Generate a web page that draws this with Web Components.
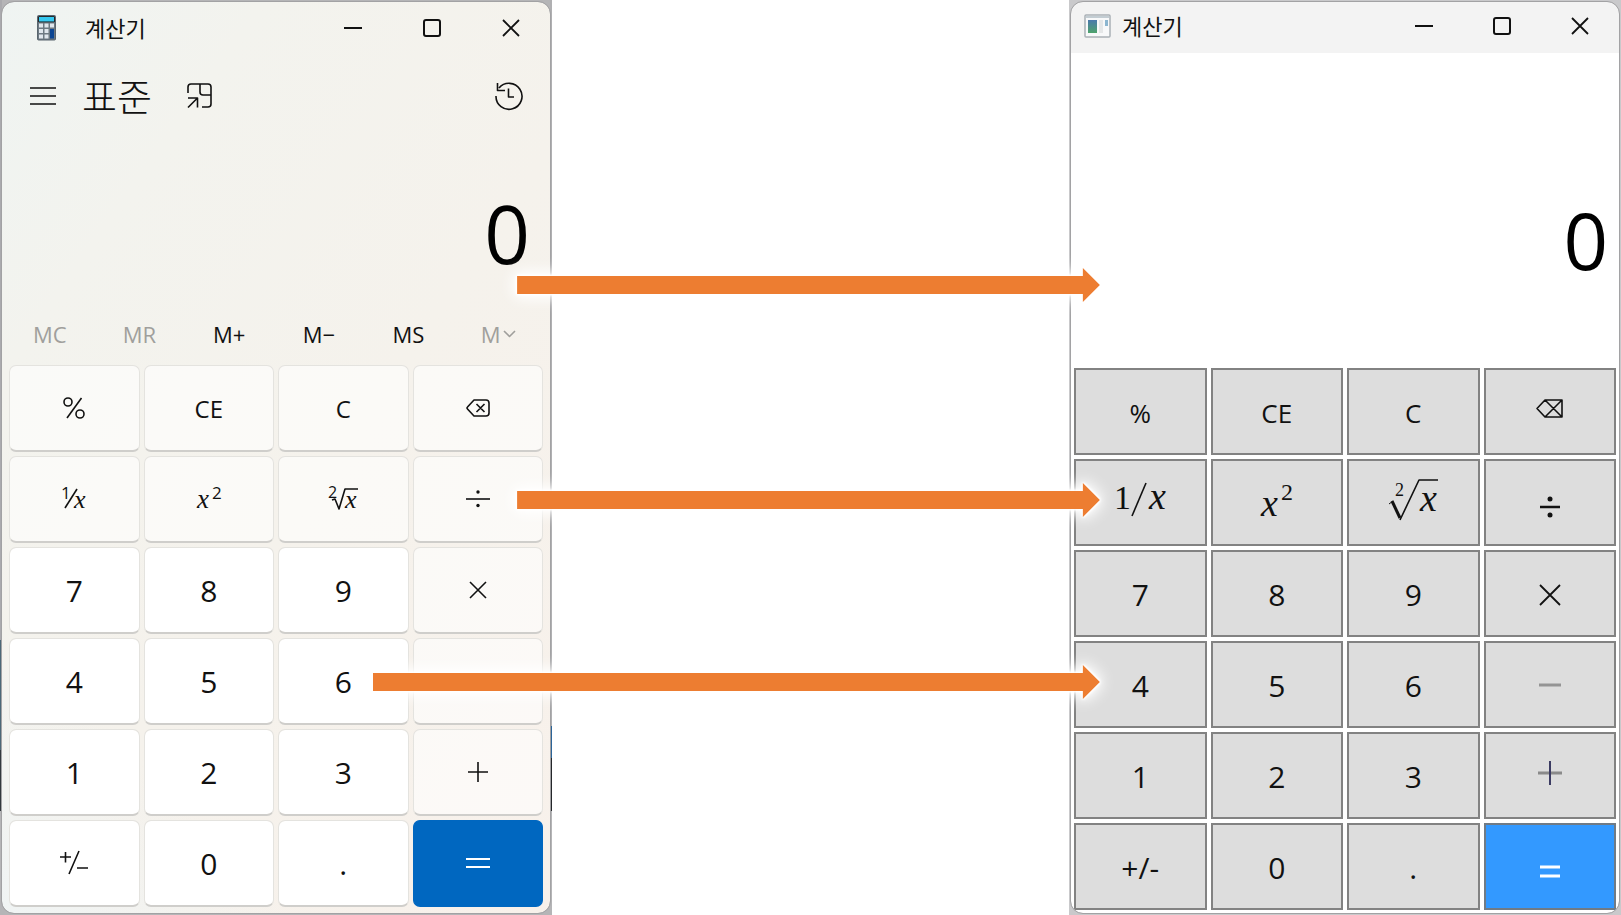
<!DOCTYPE html>
<html lang="ko">
<head>
<meta charset="utf-8">
<title>계산기</title>
<style>
  body {
    margin: 0;
    background: #fff;
    font-family: "Open Sans", "Noto Sans CJK KR", sans-serif;
    color: #111;
  }
</style>
</head>
<body>
<calc-compare>
  <calc-window slot="before" theme="fluent" heading="계산기">
    <mode-bar slot="top" mode="표준"></mode-bar>
    <calc-display slot="top">0</calc-display>
    <memory-bar slot="top"></memory-bar>
    <calc-keypad theme="fluent"></calc-keypad>
  </calc-window>
  <calc-window slot="after" theme="classic" heading="계산기">
    <calc-display slot="top">0</calc-display>
    <calc-keypad theme="classic"></calc-keypad>
  </calc-window>
  <flow-arrow slot="arrows" from="display"></flow-arrow>
  <flow-arrow slot="arrows" from="operator"></flow-arrow>
  <flow-arrow slot="arrows" from="digit"></flow-arrow>
</calc-compare>

<script>
/**
Icons, keyed by name. Every one is drawn in its own viewBox at natural size.
**/
const ICONS = {
  app: `<svg width="20" height="26" viewBox="0 0 20 26">
    <rect x=".5" y=".5" width="18" height="24.5" rx="1" fill="#6d7982" stroke="#59656e" stroke-width="1"/>
    <rect x="2" y="2" width="15" height="4.5" fill="#35c8f0"/>
    <g fill="#dfe6ec" stroke="none"><path d="M2 8.500h4v4H2zM7.500 8.500h4v4h-4zM13 8.500h4v4h-4zM2 14h4v4H2zM7.500 14h4v4h-4zM2 19.500h4v4H2zM7.500 19.500h4v4h-4z"/></g>
    <rect x="2" y="2" width="15" height="4.5" fill="#35c8f0" stroke="none"/>
    <path d="M13 14h4v9.500h-4z" fill="#0b4592" stroke="none"/></svg>`,
  generic: `<svg width="27" height="24" viewBox="0 0 27 24">
    <rect x="1" y="1" width="25" height="22" rx="1" fill="#f8f9fa" stroke="#aab1b6" stroke-width="1.500"/>
    <defs><linearGradient id="g" x2="0" y2="1"><stop stop-color="#4b79ad"/><stop offset="1" stop-color="#4ea36c"/></linearGradient></defs>
    <g stroke="none"><path d="M2 2h23v2H2z" fill="#c3cdd3"/>
    <path d="M4 6h9v13H4z" fill="url(#g)"/><path d="M15 6h4v13h-4z" fill="#e5e7e8"/><path d="M21 6h3v6h-3z" fill="#8cb6d0"/></g></svg>`,
  minimize: `<svg width="18" height="18" viewBox="0 0 18 18"><path d="M0 9h18" stroke-width="2"/></svg>`,
  maximize: `<svg width="18" height="18" viewBox="0 0 18 18"><rect x="1" y="1" width="16" height="16" rx="2" stroke-width="2"/></svg>`,
  close: `<svg width="18" height="18" viewBox="0 0 18 18"><path d="M1 1l16 16M17 1L1 17" stroke-width="1.800"/></svg>`,
  menu: `<svg width="26" height="18" viewBox="0 0 26 18"><path d="M0 1h26M0 9h26M0 17h26"/></svg>`,
  pin: `<svg width="26" height="26" viewBox="0 0 26 26"><path d="M1 10V4q0-3 3-3h17q3 0 3 3v17q0 3-3 3h-6M13 1v8q0 3 3 3h8M1 15h9.500v9.500M10 15.500L1 24.500"/></svg>`,
  history: `<svg width="28" height="28" viewBox="0 0 28 28"><path d="M1 14a13 13 0 1 0 3-8M2.500 1v7.500H10M13.500 6.500V15H19"/></svg>`,
  chevron: `<svg width="13" height="8" viewBox="0 0 13 8"><path d="M1 1l5.500 5.500L12 1"/></svg>`,
  percent: `<svg width="22" height="22" viewBox="0 0 22 22"><circle cx="5" cy="5" r="4"/><circle cx="17" cy="17" r="4"/><path d="M18.500 1L4 21"/></svg>`,
  erase: `<svg width="24" height="18" viewBox="0 0 24 18"><path d="M8 1h12q3 0 3 3v10q0 3-3 3H8L1.500 10q-1-1 0-2zM10.500 5l8 8M18.500 5l-8 8"/></svg>`,
  divide: `<svg width="24" height="24" viewBox="0 0 24 24"><path d="M0 12h24"/><g fill="currentColor" stroke="none"><circle cx="12" cy="5" r="1.700"/><circle cx="12" cy="18.500" r="1.700"/></g></svg>`,
  times: `<svg width="18" height="18" viewBox="0 0 18 18"><path d="M1 1l16 16M17 1L1 17"/></svg>`,
  minus: `<svg width="20" height="20" viewBox="0 0 20 20"><path d="M0 10h20"/></svg>`,
  plus: `<svg width="20" height="20" viewBox="0 0 20 20"><path d="M0 10h20M10 0v20"/></svg>`,
  equals: `<svg width="26" height="12" viewBox="0 0 26 12"><path d="M1 2h24M1 10h24" stroke-width="2"/></svg>`,
  sign: `<svg width="28" height="24" viewBox="0 0 28 24"><path d="M0 6h11M5.500 1v10.500M19 0L9 23M17 17h11"/></svg>`,
  reciprocal: `<svg width="26" height="28" viewBox="0 0 26 28"><path d="M16 4L4 23"/>
    <text x="0" y="14" font-size="17">1</text><text class="x" x="13" y="23" font-size="26">x</text></svg>`,
  square: `<svg width="28" height="28" viewBox="0 0 28 28"><text class="x" x="2" y="23" font-size="27">x</text>
    <text x="17" y="14" font-size="17">2</text></svg>`,
  root: `<svg width="30" height="28" viewBox="0 0 30 28"><path d="M4 15l3-1 4 10L17 4h13"/>
    <text x="0" y="13" font-size="16">2</text><text class="x" x="17" y="23" font-size="26">x</text></svg>`,
  reciprocalSerif: `<svg width="54" height="42" viewBox="0 0 54 42"><path d="M33 4L19 37"/>
    <text class="s" x="1" y="30" font-size="34">1</text><text class="x" x="36" y="30" font-size="38">x</text></svg>`,
  squareSerif: `<svg width="34" height="42" viewBox="0 0 34 42"><text class="x" x="1" y="37" font-size="38">x</text>
    <text class="s" x="21" y="21" font-size="24">2</text></svg>`,
  rootSerif: `<svg width="50" height="44" viewBox="0 0 50 44"><path d="M1 26l4-3" stroke-width="1"/><path d="M4 23l8 17" stroke-width="3"/><path d="M12 42L31 2h19"/>
    <text class="s" x="7" y="18" font-size="18">2</text><text class="x" x="32" y="33" font-size="38">x</text></svg>`,
  eraseFlat: `<svg width="28" height="20" viewBox="0 0 28 20"><path d="M9 1h17v17H9L1 9.500zM9 1l17 17M26 1L9 18"/></svg>`,
  divideBold: `<svg width="20" height="22" viewBox="0 0 20 22"><path d="M0 11h20" stroke-width="2.500"/><g fill="currentColor" stroke="none"><circle cx="10" cy="3" r="2.500"/><circle cx="10" cy="19" r="2.500"/></g></svg>`,
  timesWide: `<svg width="22" height="22" viewBox="0 0 22 22"><path d="M1 1l20 20M21 1L1 21" stroke-width="1.800"/></svg>`,
  minusGrey: `<svg width="22" height="22" viewBox="0 0 22 22"><path d="M0 10h22" stroke="#949494" stroke-width="3"/></svg>`,
  plusGrey: `<svg width="24" height="24" viewBox="0 0 24 24"><path d="M0 12h24" stroke="#8a8a8a" stroke-width="3"/><path d="M12 0v24" stroke="#3b3b62" stroke-width="2"/></svg>`,
  equalsBold: `<svg width="20" height="14" viewBox="0 0 20 14"><path d="M0 3h20M0 12h20" stroke-width="3"/></svg>`
};

// [kind, icon name or text, accessible label]
const KEYS = {
  fluent: [
    ['op', '@percent', '%'], ['op', 'CE'], ['op', 'C'], ['op', '@erase', '⌫'],
    ['op', '@reciprocal', '1/x'], ['op', '@square', 'x²'], ['op', '@root', '²√x'], ['op', '@divide', '÷'],
    ['num', '7'], ['num', '8'], ['num', '9'], ['op', '@times', '×'],
    ['num', '4'], ['num', '5'], ['num', '6'], ['op', '@minus', '−'],
    ['num', '1'], ['num', '2'], ['num', '3'], ['op', '@plus', '+'],
    ['num', '@sign', '+/−'], ['num', '0'], ['num', '.'], ['equals', '@equals', '=']
  ],
  classic: [
    ['op', '%'], ['op', 'CE'], ['op', 'C'], ['op', '@eraseFlat', '⌫'],
    ['op', '@reciprocalSerif', '1/x'], ['op', '@squareSerif', 'x²'], ['op', '@rootSerif', '²√x'], ['low', '@divideBold', '÷'],
    ['num', '7'], ['num', '8'], ['num', '9'], ['mid', '@timesWide', '×'],
    ['num', '4'], ['num', '5'], ['num', '6'], ['mid', '@minusGrey', '−'],
    ['num', '1'], ['num', '2'], ['num', '3'], ['op', '@plusGrey', '+'],
    ['num', '+/-'], ['num', '0'], ['num', '.'], ['equals', '@equalsBold', '=']
  ]
};

function attach(el, html) {
  let template = document.createElement('template');
  template.innerHTML = html;
  el.attachShadow({mode: 'open'}).appendChild(template.content.cloneNode(true));
}

class CalcIcon extends HTMLElement {

  static get observedAttributes() {
    return ['name'];
  }

  constructor() {
    super();
    attach(this, `
      <style>
        :host { display: flex; }
        svg {
          display: block;
          overflow: visible;
          fill: none;
          stroke: currentColor;
          stroke-width: 1.6;
          stroke-linejoin: round;
        }
        text { fill: currentColor; stroke: none; }
        .x { font-family: "Liberation Serif", serif; font-style: italic; }
        .s { font-family: "Liberation Serif", serif; }
      </style>
      <div id="art"></div>`);
  }

  attributeChangedCallback(attr, oldVal, newVal) {
    this.shadowRoot.getElementById('art').innerHTML = ICONS[newVal] || '';
  }
}

class CalcKey extends HTMLElement {
  constructor() {
    super();
    attach(this, `
      <style>
        :host { display: grid; }
        button {
          display: flex;
          align-items: center;
          justify-content: center;
          margin: 0;
          padding: 2px 0 0;
          font: inherit;
          font-size: 24px;
          line-height: 36px;
          color: inherit;
          background: rgba(255, 255, 255, .6);
          border: 1px solid #e4e3df;
          border-bottom: 2px solid #cfcecb;
          border-radius: 7px;
        }
        :host([icon]) button { padding: 0; }
        :host([kind="num"]) button { font-size: 30px; background: #fff; background-clip: padding-box; }
        :host([kind="equals"]) button { color: #fff; background: #0067c0; border-color: #0067c0; }
        :host([theme="classic"]) button {
          background: #ddd;
          border: 2px solid #828282;
          border-radius: 0;
        }
        :host([theme="classic"][kind="op"]) button { font-size: 26px; }
        :host([theme="classic"][icon]) button { padding: 0 0 5px; }
        :host([theme="classic"][kind="mid"]) button { padding: 3px 0 0; }
        :host([theme="classic"][kind="low"]) button,
        :host([theme="classic"][kind="equals"]) button { padding: 8px 0 0; }
        :host([theme="classic"][kind="equals"]) button { background: #3399ff; border-color: #707b86; }
      </style>
      <button type="button"><slot></slot></button>`);
  }
  connectedCallback() {
    let label = this.getAttribute('label');
    label && this.shadowRoot.querySelector('button').setAttribute('aria-label', label);
  }
}

class CalcKeypad extends HTMLElement {
  constructor() {
    super();
    attach(this, `
      <style>
        :host {
          display: grid;
          grid-template-columns: repeat(4, 1fr);
          grid-auto-rows: 87px;
          gap: 4px;
          padding: 0 7px 6px;
        }
        :host([theme="classic"]) { padding: 0 3px 3px; }
      </style>`);
  }
  connectedCallback() {
    let theme = this.getAttribute('theme');
    KEYS[theme].forEach(([kind, face, label]) => {
      let key = document.createElement('calc-key');
      key.setAttribute('kind', kind);
      key.setAttribute('theme', theme);
      label && key.setAttribute('label', label);
      if (face[0] === '@') {
        let icon = document.createElement('calc-icon');
        icon.setAttribute('name', face.slice(1));
        key.setAttribute('icon', '');
        key.appendChild(icon);
      } else {
        key.textContent = face;
      }
      this.shadowRoot.appendChild(key);
    });
  }
}

class CalcDisplay extends HTMLElement {
  constructor() {
    super();
    attach(this, `
      <style>
        :host {
          display: flex;
          flex: 1;
          align-items: center;
          justify-content: flex-end;
          padding: var(--display-padding);
          font-size: var(--display-size);
          line-height: 100px;
          color: #000;
        }
      </style>
      <output><slot></slot></output>`);
  }
}

class ModeBar extends HTMLElement {
  constructor() {
    super();
    attach(this, `
      <style>
        :host { display: flex; align-items: center; height: 86px; padding: 0 27px 0 28px; }
        h1 { margin: 0 35px 0 26px; font-size: 38px; font-weight: 300; line-height: 48px; }
        button { padding: 0; border: 0; background: none; color: inherit; }
        .history { margin-left: auto; }
      </style>
      <button type="button" aria-label="메뉴"><calc-icon name="menu"></calc-icon></button>
      <h1></h1>
      <button type="button" aria-label="항상 위"><calc-icon name="pin"></calc-icon></button>
      <button type="button" class="history" aria-label="기록"><calc-icon name="history"></calc-icon></button>`);
  }
  connectedCallback() {
    this.shadowRoot.querySelector('h1').textContent = this.getAttribute('mode');
  }
}

class MemoryBar extends HTMLElement {
  constructor() {
    super();
    attach(this, `
      <style>
        :host { display: grid; grid-template-columns: repeat(6, 1fr); padding: 0 7px 9px 3px; }
        button {
          display: flex;
          align-items: center;
          justify-content: center;
          height: 44px;
          padding: 0;
          border: 0;
          background: none;
          font: inherit;
          font-size: 22px;
          color: inherit;
        }
        button:disabled { color: #a09f9c; }
        calc-icon { margin-left: 2px; }
      </style>
      <button type="button" disabled>MC</button>
      <button type="button" disabled>MR</button>
      <button type="button">M+</button>
      <button type="button">M−</button>
      <button type="button">MS</button>
      <button type="button" disabled>M<calc-icon name="chevron"></calc-icon></button>`);
  }
}

class CalcWindow extends HTMLElement {
  constructor() {
    super();
    attach(this, `
      <style>
        :host {
          display: grid;
          min-height: 100vh;
          box-sizing: border-box;
          padding: 2px;
          background: #c9c9cb;
          --display-padding: 14px 20px 0 0;
          --display-size: 80px;
        }
        /* slivers of the desktop that show beside the window frame */
        :host([theme="fluent"]) {
          background:
            linear-gradient(#aaaaae 640px, #4c6878 640px 750px, #33393e 750px 811px, #b5b5b7 811px) left / 2px 100% no-repeat,
            linear-gradient(#b0b0b2 726px, #2b6498 726px 758px, #25272a 758px 811px, #b5b5b7 811px) right / 2px 100% no-repeat,
            #b5b5b7;
        }
        :host([theme="classic"]) {
          --display-padding: 58px 11px 0 0;
          --display-size: 78px;
        }
        section {
          display: flex;
          flex-direction: column;
          border-radius: 12px;
          outline: 1px solid #a2a2a4;
          overflow: hidden;
          background: #fff;
        }
        :host([theme="fluent"]) section {
          background:
            linear-gradient(45deg, #f0f4f4, rgba(240, 244, 244, 0) 20%),
            linear-gradient(125deg, #eff4f2, #f3f3ee 22%, #f5f2ec 55%, #f8f1eb);
        }
        header { display: flex; align-items: center; box-sizing: border-box; height: 51px; padding-left: 35px; }
        :host([theme="classic"]) header { padding: 0 0 3px 13px; background: #f3f3f3; }
        .caption { flex: 1; margin-left: 28px; font-size: 22px; line-height: 28px; }
        :host([theme="classic"]) .caption { margin-left: 11px; }
        button {
          display: flex;
          align-items: center;
          justify-content: center;
          width: 79px;
          height: 48px;
          padding: 0;
          border: 0;
          background: none;
          color: inherit;
        }
        :host([theme="classic"]) button { width: 78px; }
        .top { display: flex; flex: 1; flex-direction: column; }
      </style>
      <section>
        <header>
          <calc-icon id="logo"></calc-icon>
          <span class="caption"></span>
          <button type="button" aria-label="최소화"><calc-icon name="minimize"></calc-icon></button>
          <button type="button" aria-label="최대화"><calc-icon name="maximize"></calc-icon></button>
          <button type="button" aria-label="닫기"><calc-icon name="close"></calc-icon></button>
        </header>
        <div class="top"><slot name="top"></slot></div>
        <slot></slot>
      </section>`);
  }
  connectedCallback() {
    let fluent = this.getAttribute('theme') === 'fluent';
    this.shadowRoot.getElementById('logo').setAttribute('name', fluent ? 'app' : 'generic');
    this.shadowRoot.querySelector('.caption').textContent = this.getAttribute('heading');
  }
}

class FlowArrow extends HTMLElement {
  constructor() {
    super();
    attach(this, `
      <style>
        :host {
          position: absolute;
          left: 31.9%;
          right: 32.15%;
          bottom: 613px;
          height: 34px;
          pointer-events: none;
          filter: drop-shadow(0 0 1px #fff) drop-shadow(0 0 1px #fff) drop-shadow(0 0 1px #fff) drop-shadow(0 0 8px #fff) drop-shadow(0 0 5px rgba(255, 255, 255, .6));
        }
        :host([from="operator"]) { bottom: 398px; }
        :host([from="digit"]) { left: 23%; bottom: 216px; }
        div {
          height: 100%;
          background: #ed7d31;
          clip-path: polygon(0 8px, calc(100% - 17px) 8px, calc(100% - 17px) 0, 100% 50%, calc(100% - 17px) 100%, calc(100% - 17px) 26px, 0 26px);
        }
      </style>
      <div></div>`);
  }
}

class CalcCompare extends HTMLElement {
  constructor() {
    super();
    attach(this, `
      <style>
        :host {
          display: grid;
          grid-template-columns: 552fr 517fr 552fr;
          position: relative;
        }
        .after { grid-column: 3; }
      </style>
      <div><slot name="before"></slot></div>
      <div class="after"><slot name="after"></slot></div>
      <slot name="arrows"></slot>`);
  }
}

window.customElements.define('calc-icon', CalcIcon);
window.customElements.define('calc-key', CalcKey);
window.customElements.define('calc-keypad', CalcKeypad);
window.customElements.define('calc-display', CalcDisplay);
window.customElements.define('mode-bar', ModeBar);
window.customElements.define('memory-bar', MemoryBar);
window.customElements.define('calc-window', CalcWindow);
window.customElements.define('flow-arrow', FlowArrow);
window.customElements.define('calc-compare', CalcCompare);
</script>
</body>
</html>
